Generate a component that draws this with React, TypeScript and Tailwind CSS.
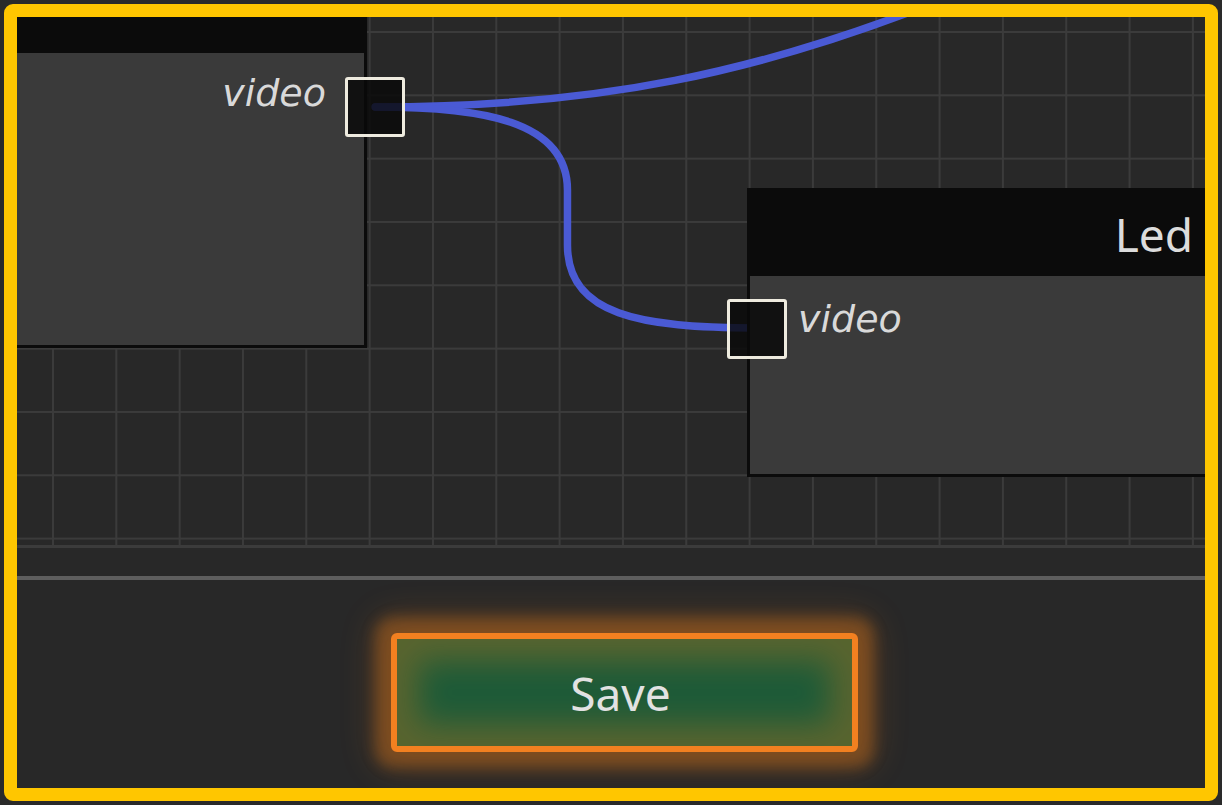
type Pin = {
  left: number
  top: number
}

const font = { fontFamily: '"Noto Sans", "DejaVu Sans", sans-serif' }
const labelFont = { fontFamily: '"DejaVu Sans", "Noto Sans", sans-serif' }

function Port({ left, top }: Pin) {
  return (
    <div
      className="absolute h-[60px] w-[60px] rounded-[3px] border-[3px] border-[#eeebdf] bg-[rgba(8,8,8,0.82)]"
      style={{ left, top }}
    />
  )
}

function Wires() {
  return (
    <svg
      className="absolute inset-0 h-full w-full"
      viewBox="17 17 1187 528"
      preserveAspectRatio="none"
    >
      <g fill="none" stroke="#4a5ad4" strokeWidth="7.5" strokeLinecap="round">
        <path d="M375 107 C 580 107, 760 80, 1000 -25" />
        <path d="M375 107 C 480 107, 567 120, 567 190 L 567 245 C 567 315, 640 328, 756 328" />
      </g>
    </svg>
  )
}

function App() {
  return (
    <div className="h-[805px] w-[1222px] bg-[#2a2a2a] p-[4px]" style={font}>
      <div className="flex h-full w-full flex-col overflow-hidden rounded-[9px] border-[13px] border-[#ffc600] bg-[#282828]">
        {/* node canvas */}
        <div className="relative h-[531px] shrink-0 border-b-[3px] border-[#3b3b3b] bg-[#282828] bg-[linear-gradient(to_right,#3b3b3b_2px,transparent_2px),linear-gradient(to_bottom,#3b3b3b_2px,transparent_2px)] bg-[size:63.33px_63.33px] bg-[position:35px_14px]">
          <Wires />

          <div className="absolute left-[-60px] top-[-20px] flex h-[351px] w-[410px] flex-col border-[3px] border-[#0b0b0b] bg-[#3a3a3a]">
            <div className="h-[53px] bg-[#0b0b0b]" />
            <div className="flex justify-end pr-[38px] pt-[21px]">
              <span className="text-[38px] italic leading-none text-[#d9d9d9]" style={labelFont}>
                video
              </span>
            </div>
          </div>
          <Port left={328} top={60} />

          <div className="absolute left-[730px] top-[171px] flex h-[289px] w-[480px] flex-col border-[3px] border-[#0b0b0b] bg-[#3a3a3a]">
            <div className="flex h-[85px] items-center justify-end bg-[#0b0b0b] pr-[31px]">
              <span className="text-[46px] leading-none text-[#dcdcdc]">Led</span>
            </div>
            <div className="pl-[48px] pt-[24px]">
              <span className="text-[38px] italic leading-none text-[#d9d9d9]" style={labelFont}>
                video
              </span>
            </div>
          </div>
          <Port left={710} top={282} />
        </div>

        <div className="h-[28px] shrink-0" />
        <div className="h-[4px] shrink-0 bg-[#5e5e5e]" />

        {/* save panel */}
        <div className="flex-1 pl-[374px] pt-[53px]">
          <button
            type="button"
            className="flex h-[119px] w-[467px] items-center justify-center rounded-[6px] border-[6px] border-[#f28020] bg-[#1e5b38] pr-[8px] text-[46px] leading-none text-[#e2e2e2] shadow-[0_0_14px_16px_rgba(240,127,26,0.32),0_0_36px_16px_rgba(240,127,26,0.2),inset_0_0_30px_22px_rgba(240,127,26,0.28)]"
          >
            Save
          </button>
        </div>
      </div>
    </div>
  )
}

export default App
